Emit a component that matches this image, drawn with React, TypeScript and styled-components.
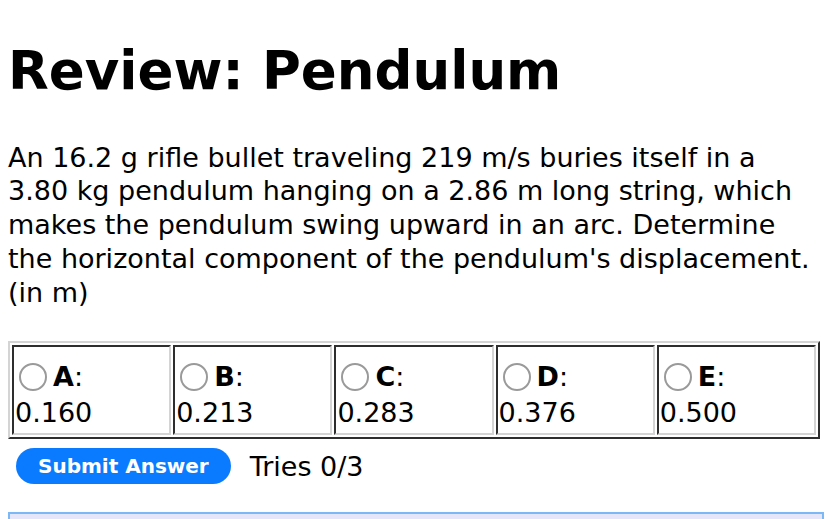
import React from "react";
import styled, { createGlobalStyle } from "styled-components";

const GlobalStyle = createGlobalStyle`
  html, body {
    margin: 0;
    padding: 0;
    background: #ffffff;
  }
  body {
    font-family: "DejaVu Sans", Verdana, sans-serif;
    color: #000000;
  }
`;

const Page = styled.div`
  padding: 0 8px;
  font-size: 27px;
`;

const Title = styled.h1`
  font-size: 53px;
  font-weight: bold;
  line-height: 1.164;
  margin: 40px 0 39px;
`;

const Question = styled.p`
  margin: 0 0 32px;
  line-height: 33.75px;
`;

const Choices = styled.table`
  width: 100%;
  border-collapse: separate;
  border-spacing: 2px;
  border: 2px solid;
  border-color: #d4d4d4 #2e2e2e #2e2e2e #d4d4d4;
  table-layout: fixed;
`;

const Cell = styled.td`
  border: 2px solid;
  border-color: #2e2e2e #d4d4d4 #d4d4d4 #2e2e2e;
  padding: 10px 1px 4px;
  vertical-align: top;
  line-height: 33.75px;
`;

const ChoiceLabel = styled.label`
  display: flex;
  align-items: center;
  height: 39px;
`;

const Radio = styled.input`
  appearance: none;
  width: 28px;
  height: 28px;
  margin: 0 6px 0 4px;
  border: 2px solid #9a9a9a;
  border-radius: 50%;
  background: #ffffff;
  box-sizing: border-box;
`;

const Letter = styled.b`
  font-weight: bold;
`;

const Value = styled.div`
  line-height: 33px;
`;

const Actions = styled.div`
  display: flex;
  align-items: center;
  gap: 19px;
  margin: 9px 0 0 8px;
`;

const SubmitButton = styled.button`
  height: 36px;
  padding: 0 22px;
  border: none;
  border-radius: 18px;
  background: #0a7bff;
  color: #ffffff;
  font-family: "DejaVu Sans", Verdana, sans-serif;
  font-size: 20px;
  font-weight: bold;
  cursor: pointer;
`;

const Tries = styled.span`
  font-size: 27px;
`;

const Feedback = styled.div`
  margin: 28px -4px 0 0;
  height: 40px;
  border: 2px solid #7cb8f6;
  background: #e6e6fb;
`;

const choices = [
  { key: "A", value: "0.160" },
  { key: "B", value: "0.213" },
  { key: "C", value: "0.283" },
  { key: "D", value: "0.376" },
  { key: "E", value: "0.500" },
];

const App = () => {
  return (
    <Page>
      <GlobalStyle />
      <Title>Review: Pendulum</Title>
      <Question>
        An 16.2 g rifle bullet traveling 219 m/s buries itself in a 3.80 kg
        pendulum hanging on a 2.86 m long string, which makes the pendulum
        swing upward in an arc. Determine the horizontal component of the
        pendulum's displacement. (in m)
      </Question>
      <Choices>
        <tbody>
          <tr>
            {choices.map((c) => (
              <Cell key={c.key}>
                <ChoiceLabel>
                  <Radio type="radio" name="answer" value={c.key} />
                  <Letter>{c.key}</Letter>:
                </ChoiceLabel>
                <Value>{c.value}</Value>
              </Cell>
            ))}
          </tr>
        </tbody>
      </Choices>
      <Actions>
        <SubmitButton type="button">Submit Answer</SubmitButton>
        <Tries>Tries 0/3</Tries>
      </Actions>
      <Feedback />
    </Page>
  );
};

export default App;
